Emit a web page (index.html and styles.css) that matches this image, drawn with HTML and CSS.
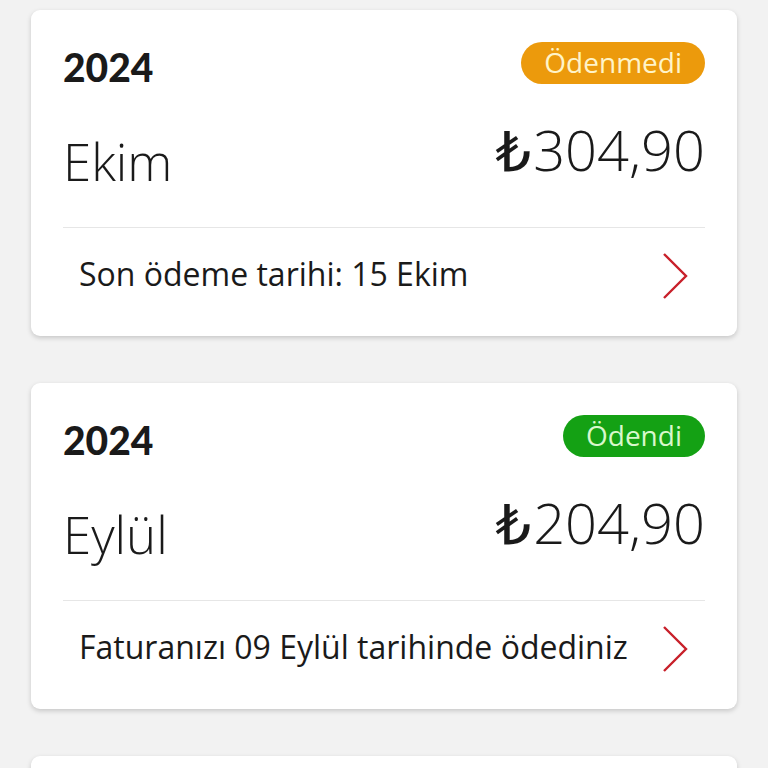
FILE: index.html
```html
<!DOCTYPE html>
<html lang="tr">
<head>
    <meta charset="UTF-8">
    <meta name="viewport" content="width=device-width, initial-scale=1.0">
    <title>Faturalarım</title>
    <link rel="stylesheet" href="styles.css">
</head>
<body>
    <div class="bill-list">
        <div class="bill-card">
            <div class="bill-head">
                <span class="bill-year">2024</span>
                <span class="badge badge-unpaid">Ödenmedi</span>
            </div>
            <div class="bill-main">
                <span class="bill-month">Ekim</span>
                <span class="bill-amount"><span class="lira">₺</span>304,90</span>
            </div>
            <div class="bill-foot">
                <span class="bill-note">Son ödeme tarihi: 15 Ekim</span>
                <svg class="chevron" width="26" height="48" viewBox="0 0 26 48">
                    <polyline points="2,2 24,24 2,46" fill="none" stroke="#c8202a" stroke-width="2.4" />
                </svg>
            </div>
        </div>

        <div class="bill-card">
            <div class="bill-head">
                <span class="bill-year">2024</span>
                <span class="badge badge-paid">Ödendi</span>
            </div>
            <div class="bill-main">
                <span class="bill-month">Eylül</span>
                <span class="bill-amount"><span class="lira">₺</span>204,90</span>
            </div>
            <div class="bill-foot">
                <span class="bill-note">Faturanızı 09 Eylül tarihinde ödediniz</span>
                <svg class="chevron" width="26" height="48" viewBox="0 0 26 48">
                    <polyline points="2,2 24,24 2,46" fill="none" stroke="#c8202a" stroke-width="2.4" />
                </svg>
            </div>
        </div>

        <div class="bill-card"></div>
    </div>
</body>
</html>
```

FILE: styles.css
```css
body {
    font-family: "Open Sans", "DejaVu Sans", sans-serif;
    background-color: #f2f2f2;
    color: #1a1a1a;
    margin: 0;
    padding: 0;
}

.bill-list {
    display: flex;
    flex-direction: column;
    gap: 47px;
    padding: 10px 31px 0;
}

.bill-card {
    background-color: #fff;
    border-radius: 9px;
    box-shadow: 0 2px 5px rgba(0, 0, 0, 0.18);
    padding: 32px 32px 12px;
    min-height: 100px;
}

.bill-head {
    display: flex;
    justify-content: space-between;
    align-items: center;
    height: 42px;
}

.bill-year {
    font-family: Lato, sans-serif;
    font-weight: 900;
    font-size: 39px;
    line-height: 1;
    padding-top: 8px;
}

.badge {
    height: 42px;
    line-height: 40px;
    padding: 0 23px;
    border-radius: 21px;
    font-size: 28px;
}

.badge-unpaid {
    background-color: #ec9a0c;
    color: #fff4c8;
}

.badge-paid {
    background-color: #14a114;
    color: #d8f8cc;
}

.bill-main {
    display: flex;
    justify-content: space-between;
    align-items: center;
    height: 143px;
    border-bottom: 1px solid #e6e6e6;
}

.bill-month {
    font-weight: 300;
    font-size: 51px;
    padding-top: 10px;
}

.bill-amount {
    font-weight: 300;
    font-size: 56px;
    margin-bottom: 14px;
}

.lira {
    font-weight: 500;
    margin-right: 2px;
}

.bill-foot {
    display: flex;
    justify-content: space-between;
    align-items: center;
    height: 96px;
    padding-left: 16px;
    padding-right: 17px;
}

.bill-note {
    font-size: 32px;
    margin-bottom: 6px;
}
```
